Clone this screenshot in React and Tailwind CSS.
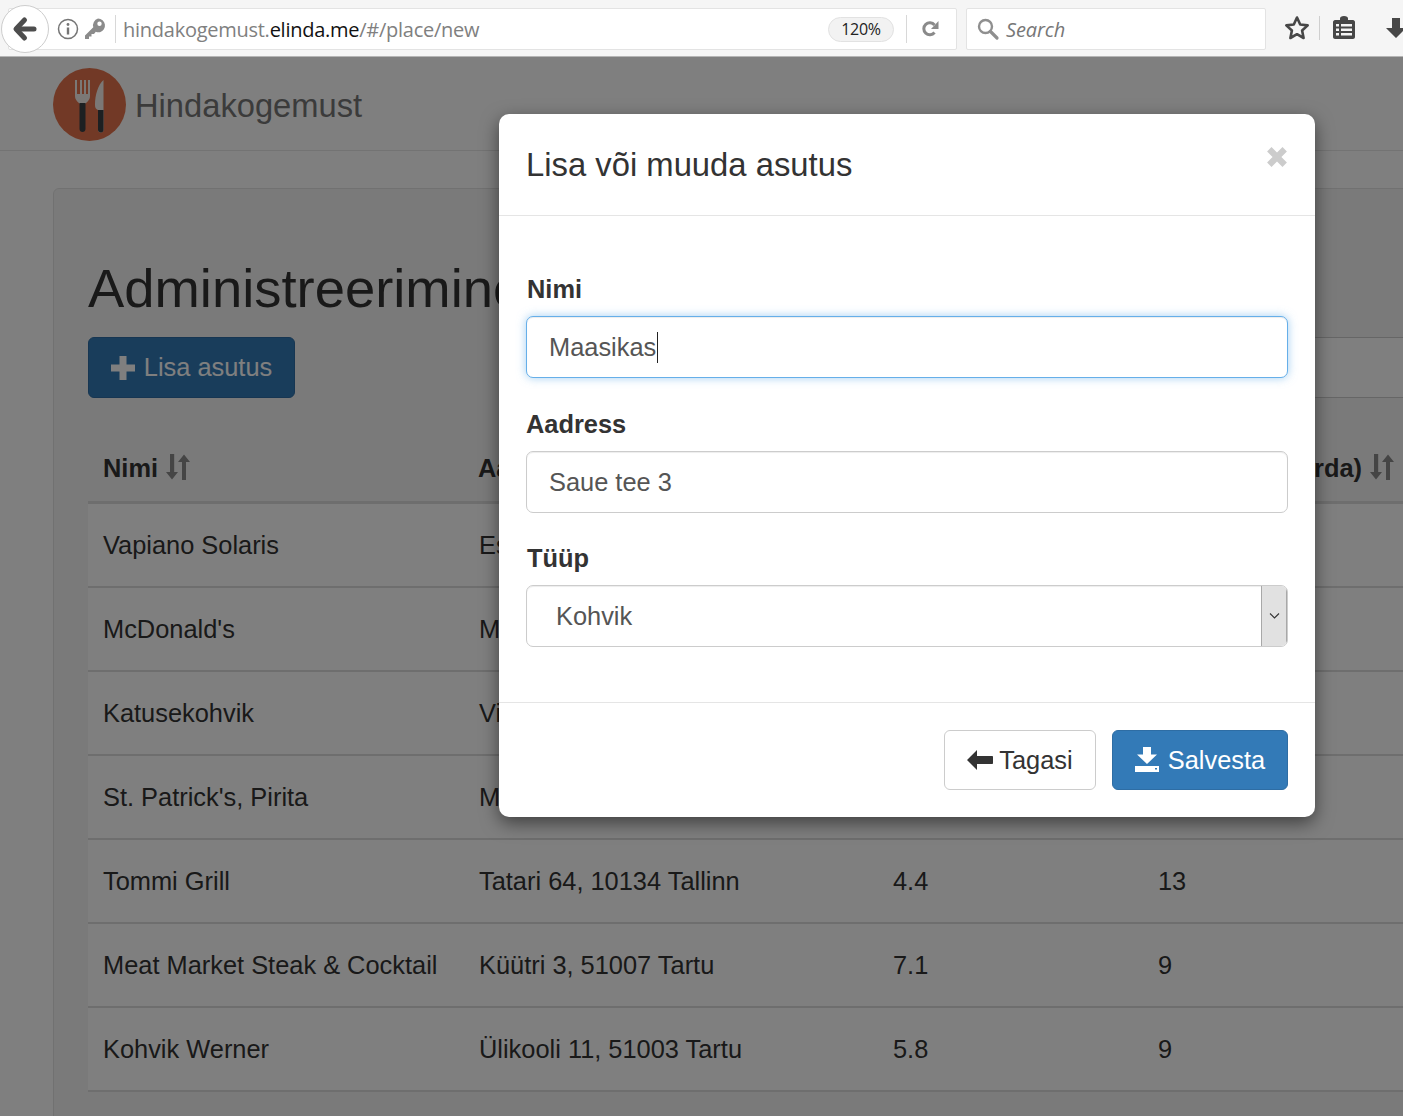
const rows = [
  ["Vapiano Solaris", "Es", "", ""],
  ["McDonald's", "M", "", ""],
  ["Katusekohvik", "Vi", "", ""],
  ["St. Patrick's, Pirita", "M", "", ""],
  ["Tommi Grill", "Tatari 64, 10134 Tallinn", "4.4", "13"],
  ["Meat Market Steak & Cocktail", "Küütri 3, 51007 Tartu", "7.1", "9"],
  ["Kohvik Werner", "Ülikooli 11, 51003 Tartu", "5.8", "9"],
];

function SortIcon() {
  return (
    <svg width="24" height="26" viewBox="0 0 24 26" className="shrink-0 -mt-[2px]">
      <path d="M4 0h4.200v18H12l-6 7.500L0 18h4z" fill="#8a8a8a" />
      <path d="M16 26h4V8h4L18 .5 12 8h4z" fill="#8a8a8a" />
    </svg>
  );
}

function Logo() {
  return (
    <svg width="73" height="73" viewBox="0 0 73 73" className="shrink-0">
      <circle cx="36.5" cy="36.5" r="36.5" fill="#e5734c" />
      <path d="M22 12v16c0 4 3 6 5 8h5c2-2 5-4 5-8V12h-2v14h-2V12h-2v14h-2V12h-2v14h-3V12z" fill="#f6f1ec" />
      <path d="M26.5 35h6v26c0 2-1.3 3-3 3s-3-1-3-3z" fill="#3a4044" />
      <path d="M50.500 12v50c0 1.500-1 2.500-2.500 2.500-2.500 0-3-1.500-3-3V42c-2-1-3-2-3-5 0-10 3-20 8.500-25z" fill="#f6f1ec" />
      <path d="M45 42h5.500v20c0 1.500-1 2.500-2.500 2.500s-3-1-3-2.500z" fill="#3a4044" />
    </svg>
  );
}

function BrowserBar() {
  return (
    <div className="relative z-10 h-[57px] shrink-0 bg-[#f5f5f5] border-b border-[#b5b5b5] font-['Open_Sans',sans-serif]">
      <div className="flex items-center h-full pl-[8px] pr-0">
        <div className="flex items-center h-[42px] w-[949px] bg-white border border-[#e3e3e3] rounded-[2px] shrink-0 mt-[2px]">
          <div className="w-[47px] shrink-0" />
          <svg width="24" height="24" viewBox="0 0 24 24" className="shrink-0">
            <circle cx="12" cy="12" r="9.500" fill="none" stroke="#757575" strokeWidth="1.500" />
            <circle cx="12" cy="7.500" r="1.400" fill="#757575" />
            <rect x="10.800" y="10.500" width="2.400" height="7" fill="#757575" />
          </svg>
          <svg width="24" height="24" viewBox="0 0 24 24" className="ml-[3px] shrink-0">
            <path d="M15 1.500a7 7 0 0 1 2 13.700c-1.500.3-3 .1-4.200-.5L11 17H8.500v2.500H6V22H2v-3.500l8.300-8.300A7 7 0 0 1 15 1.500zm1.500 3a2.200 2.200 0 1 0 0 4.400 2.200 2.200 0 0 0 0-4.400z" fill="#8b8b8b" />
          </svg>
          <div className="w-px h-[28px] bg-[#d8d8d8] ml-[8px] mr-[7px] shrink-0" />
          <div className="flex-1 text-[20px] leading-none whitespace-nowrap tracking-[-0.26px] text-[#808080] pt-[2px]">
            hindakogemust.<span className="text-[#111111]">elinda.me</span>/#/place/new
          </div>
          <div className="flex items-center justify-center w-[66px] h-[25px] rounded-full bg-[#f2f2f2] border border-[#e2e2e2] text-[16px] text-[#222222] tracking-[-0.3px] shrink-0">120%</div>
          <div className="w-px h-[28px] bg-[#d8d8d8] ml-[12px] shrink-0" />
          <svg width="22" height="22" viewBox="0 0 22 22" className="ml-[12px] mr-[15px] shrink-0">
            <path d="M15.500 14.500a6 6 0 1 1 0-7.500" fill="none" stroke="#8a8a8a" strokeWidth="3" />
            <path d="M19.500 3v8h-7.500z" fill="#8a8a8a" />
          </svg>
        </div>
        <div className="flex items-center h-[42px] w-[300px] ml-[9px] bg-white border border-[#e3e3e3] rounded-[2px] shrink-0 mt-[2px]">
          <svg width="24" height="24" viewBox="0 0 24 24" className="ml-[9px] shrink-0">
            <circle cx="9.500" cy="9.500" r="6.500" fill="none" stroke="#8f8f8f" strokeWidth="2.400" />
            <path d="M14.500 14.500l6.500 6.500" stroke="#8f8f8f" strokeWidth="3.200" strokeLinecap="round" />
          </svg>
          <span className="ml-[6px] text-[20px] leading-none italic text-[#777777] tracking-[-0.1px] pt-[2px]">Search</span>
        </div>
        <svg width="28" height="28" viewBox="0 0 28 28" className="ml-[17px] shrink-0">
          <path d="M14 3.500l3.200 7 7.500.9-5.600 5.100 1.500 7.500-6.600-3.800-6.600 3.800 1.500-7.500-5.600-5.100 7.500-.9z" fill="none" stroke="#474747" strokeWidth="2.600" strokeLinejoin="round" />
        </svg>
        <div className="w-px h-[24px] bg-[#cfcfcf] ml-[8px] shrink-0" />
        <svg width="24" height="26" viewBox="0 0 24 26" className="ml-[12px] shrink-0">
          <path d="M3 5h5V3.500a4 2.500 0 0 1 8 0V5h5c1 0 2 1 2 2v15c0 1-1 2-2 2H3c-1 0-2-1-2-2V7c0-1 1-2 2-2z" fill="#474747" />
          <path d="M4 9h3v2.500H4zm5 0h11v2.500H9zM4 13.500h3V16H4zm5 0h11V16H9zM4 18h3v2.500H4zm5 0h11v2.500H9z" fill="#f5f5f5" />
        </svg>
        <svg width="20" height="24" viewBox="0 0 20 24" className="ml-[30px] shrink-0">
          <path d="M6 2h8v10h6l-10 10L0 12h6z" fill="#474747" />
        </svg>
      </div>
      <div className="absolute left-[1px] top-[5px] w-[48px] h-[48px] rounded-full bg-white border border-[#cdcdcd] flex items-center justify-center">
        <svg width="26" height="26" viewBox="0 0 26 26">
          <path d="M12.500 4L4 13l8.500 9" fill="none" stroke="#4d4d4d" strokeWidth="5" strokeLinecap="round" strokeLinejoin="round" />
          <path d="M6 13h16" stroke="#4d4d4d" strokeWidth="5" strokeLinecap="round" />
        </svg>
      </div>
    </div>
  );
}

function Background() {
  return (
    <div className="flex-1 flex flex-col overflow-hidden bg-white font-['Liberation_Sans',sans-serif] text-[#333333]">
      <div className="h-[94px] shrink-0 border-b border-[#e7e7e7] bg-[#ffffff] flex items-center pl-[53px] pt-[2px]">
        <Logo />
        <span className="ml-[9px] text-[32.700px] leading-none text-[#777777] whitespace-nowrap pt-[4px]">Hindakogemust</span>
      </div>
      <div className="ml-[53px] mt-[37px] w-[1500px] h-[1000px] shrink-0 bg-[#f5f5f5] border border-[#e3e3e3] rounded-[6px] pt-[72px] pl-[34px]">
        <h2 className="text-[54.400px] leading-[56px] text-[#333333] whitespace-nowrap">Administreerimine</h2>
        <div className="flex items-center mt-[20px] h-[61px]">
          <button className="flex items-center justify-center w-[207px] h-[61px] bg-[#337ab7] border border-[#2e6da4] rounded-[6px] text-white text-[25.400px] shrink-0">
            <svg width="24" height="24" viewBox="0 0 24 24" className="mr-[9px] shrink-0">
              <path d="M8.500 0h7v8.500H24v7h-8.500V24h-7v-8.500H0v-7h8.500z" fill="white" />
            </svg>
            Lisa asutus
          </button>
          <div className="ml-[900px] w-[300px] h-[61px] bg-white border border-[#cccccc] rounded-[6px] shrink-0" />
        </div>
        <div className="w-[1400px] mt-[40px]">
          <div className="flex items-center h-[66px] border-b-[3px] border-[#dddddd] text-[25.400px] font-bold">
            <div className="w-[390px] pl-[15px] flex items-center gap-[8px] shrink-0 -mt-[2px]">Nimi <SortIcon /></div>
            <div className="w-[680px] shrink-0 -mt-[2px]">Aadress</div>
            <div className="w-[212px] flex items-center gap-[8px] shrink-0 whitespace-nowrap -mt-[2px]">
              <span className="w-[204px] text-right shrink-0">rda)</span><SortIcon />
            </div>
          </div>
          {rows.map((r) => (
            <div key={r[0]} className="flex items-center h-[84px] border-b-2 border-[#dddddd] bg-white text-[25.400px] whitespace-nowrap pt-[1px]">
              <div className="w-[391px] pl-[15px] shrink-0">{r[0]}</div>
              <div className="w-[414px] shrink-0">{r[1]}</div>
              <div className="w-[265px] shrink-0">{r[2]}</div>
              <div className="shrink-0">{r[3]}</div>
            </div>
          ))}
        </div>
      </div>
    </div>
  );
}

function Modal() {
  return (
    <div className="absolute left-[499px] top-[114px] w-[816px] h-[703px] flex flex-col bg-white rounded-[10px] shadow-[0_6px_18px_rgba(0,0,0,0.5)] font-['Liberation_Sans',sans-serif] text-[#333333]">
      <div className="h-[102px] shrink-0 border-b border-[#e5e5e5] flex items-center justify-between pl-[27px] pr-[27px]">
        <h4 className="text-[32.800px] leading-none mt-[1px]">Lisa või muuda asutus</h4>
        <svg width="22" height="22" viewBox="0 0 20 20" className="mb-[16px]">
          <path d="M1 5l4-4 5 5 5-5 4 4-5 5 5 5-4 4-5-5-5 5-4-4 5-5z" fill="#cccccc" />
        </svg>
      </div>
      <div className="flex-1 px-[27px] pt-[54px]">
        <div className="text-[25.400px] font-bold leading-[36px] h-[46px] pl-[1px] pt-[1px]">Nimi</div>
        <div className="flex items-center h-[62px] w-[762px] bg-white border border-[#66afe9] rounded-[7px] shadow-[inset_0_1px_1px_rgba(0,0,0,0.075),0_0_10px_rgba(102,175,233,0.6)] pl-[22px] pt-[1px] text-[25.400px] text-[#555555]">
          Maasikas<span className="w-px h-[31px] bg-[#222222] ml-[1px] -mt-[1px]" />
        </div>
        <div className="text-[25.400px] font-bold leading-[36px] h-[46px] mt-[27px] pt-[1px]">Aadress</div>
        <div className="flex items-center h-[62px] w-[762px] bg-white border border-[#cccccc] rounded-[7px] shadow-[inset_0_1px_1px_rgba(0,0,0,0.075)] pl-[22px] pt-[1px] text-[25.400px] text-[#555555]">
          Saue tee 3
        </div>
        <div className="text-[25.400px] font-bold leading-[36px] h-[46px] mt-[26px] pl-[1px] pt-[1px]">Tüüp</div>
        <div className="flex items-center h-[62px] w-[762px] bg-white border border-[#cccccc] rounded-[7px] shadow-[inset_0_1px_1px_rgba(0,0,0,0.075)] pl-[29px] text-[25.400px] text-[#555555] overflow-hidden">
          <span className="flex-1">Kohvik</span>
          <div className="w-[26px] h-full bg-[#e1e1e1] border-l border-r border-[#a8a8a8] flex items-center justify-center shrink-0">
            <svg width="11" height="8" viewBox="0 0 11 8">
              <path d="M1 1.500l4.500 4.500L10 1.500" fill="none" stroke="#333333" strokeWidth="1.100" />
            </svg>
          </div>
        </div>
      </div>
      <div className="h-[115px] shrink-0 border-t border-[#e5e5e5] flex items-start justify-end gap-[16px] pr-[27px] pt-[27px]">
        <button className="flex items-center justify-center w-[152px] h-[60px] bg-white border border-[#cccccc] rounded-[6px] text-[25.400px] text-[#333333] pt-[1px]">
          <svg width="26" height="20" viewBox="0 0 26 20" className="mr-[6px] shrink-0 -mt-[2px]">
            <path d="M0 10L10 0v6h15c.6 0 1 .4 1 1v6c0 .6-.4 1-1 1H10v6z" fill="#333333" />
          </svg>
          Tagasi
        </button>
        <button className="flex items-center justify-center w-[176px] h-[60px] bg-[#337ab7] border border-[#2e6da4] rounded-[6px] text-[25.400px] text-white pt-[1px]">
          <svg width="24" height="25" viewBox="0 0 24 25" className="mr-[9px] shrink-0 -mt-[2px]">
            <path d="M8 0h8v7.500h6L12 17 2 7.500h6z" fill="white" />
            <path fillRule="evenodd" d="M0 19h24v6H0zM20 21v1.500h2V21z" fill="white" />
          </svg>
          Salvesta
        </button>
      </div>
    </div>
  );
}

export default function App() {
  return (
    <div className="relative w-[1403px] h-[1116px] overflow-hidden flex flex-col bg-white">
      <BrowserBar />
      <Background />
      <div className="absolute left-0 right-0 top-[57px] bottom-0 bg-black/50" />
      <Modal />
    </div>
  );
}
